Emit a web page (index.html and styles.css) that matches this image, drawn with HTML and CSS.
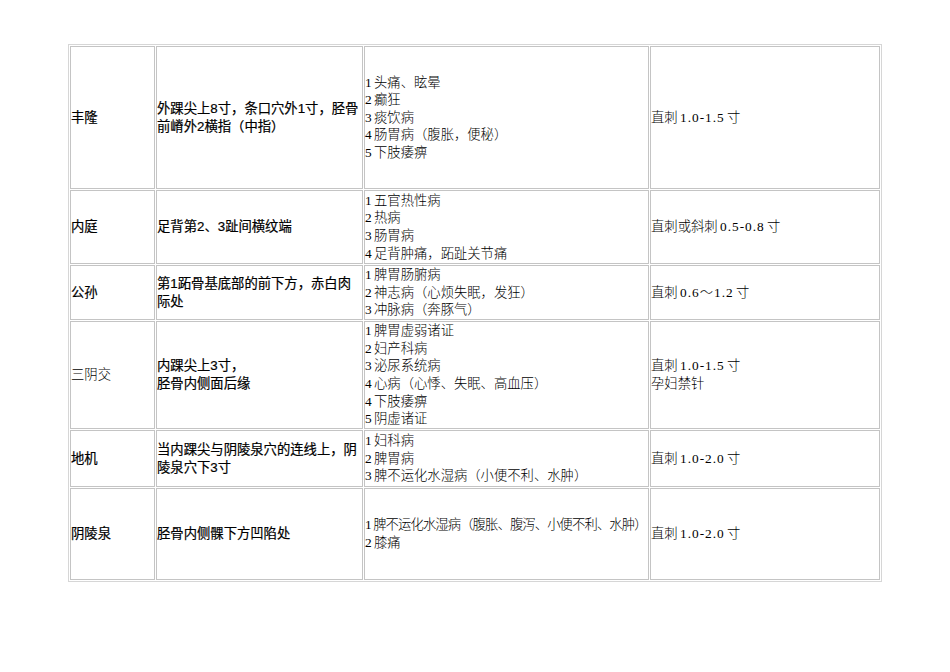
FILE: index.html
```html
<!DOCTYPE html>
<html lang="zh-CN">
<head>
<meta charset="utf-8">
<title>腧穴表</title>
<link rel="stylesheet" href="styles.css">
</head>
<body>
<div class="page">
<table class="acu">
  <tr class="r1">
    <td class="c1 hei">丰隆</td>
    <td class="c2 hei">外踝尖上8寸，条口穴外1寸，胫骨前嵴外2横指（中指）</td>
    <td class="c3 song">1 头痛、眩晕<br>2 癫狂<br>3 痰饮病<br>4 肠胃病（腹胀，便秘）<br>5 下肢痿痹</td>
    <td class="c4 song">直刺 <span class="num">1.0-1.5</span> 寸</td>
  </tr>
  <tr class="r2">
    <td class="c1 hei">内庭</td>
    <td class="c2 hei">足背第2、3趾间横纹端</td>
    <td class="c3 song">1 五官热性病<br>2 热病<br>3 肠胃病<br>4 足背肿痛，跖趾关节痛</td>
    <td class="c4 song">直刺或斜刺 <span class="num">0.5-0.8</span> 寸</td>
  </tr>
  <tr class="r3">
    <td class="c1 hei">公孙</td>
    <td class="c2 hei">第1跖骨基底部的前下方，赤白肉际处</td>
    <td class="c3 song">1 脾胃肠腑病<br>2 神志病（心烦失眠，发狂）<br>3 冲脉病（奔豚气）</td>
    <td class="c4 song">直刺 <span class="num">0.6～1.2</span> 寸</td>
  </tr>
  <tr class="r4">
    <td class="c1 song">三阴交</td>
    <td class="c2 hei">内踝尖上3寸，<br>胫骨内侧面后缘</td>
    <td class="c3 song">1 脾胃虚弱诸证<br>2 妇产科病<br>3 泌尿系统病<br>4 心病（心悸、失眠、高血压）<br>4 下肢痿痹<br>5 阴虚诸证</td>
    <td class="c4 song">直刺 <span class="num">1.0-1.5</span> 寸<br>孕妇禁针</td>
  </tr>
  <tr class="r5">
    <td class="c1 hei">地机</td>
    <td class="c2 hei">当内踝尖与阴陵泉穴的连线上，阴陵泉穴下3寸</td>
    <td class="c3 song">1 妇科病<br>2 脾胃病<br>3 脾不运化水湿病（小便不利、水肿）</td>
    <td class="c4 song">直刺 <span class="num">1.0-2.0</span> 寸</td>
  </tr>
  <tr class="r6">
    <td class="c1 hei">阴陵泉</td>
    <td class="c2 hei">胫骨内侧髁下方凹陷处</td>
    <td class="c3 song"><span class="tight">1 脾不运化水湿病（腹胀、腹泻、小便不利、水肿）</span><br>2 膝痛</td>
    <td class="c4 song">直刺 <span class="num">1.0-2.0</span> 寸</td>
  </tr>
</table>
</div>
</body>
</html>
```

FILE: styles.css
```css
html, body {
  margin: 0;
  padding: 0;
  background: #ffffff;
}

.page {
  padding: 44px 0 0 68px;
}

.acu {
  border-collapse: separate;
  border-spacing: 1px;
  border: 1px solid #d6d6d6;
  table-layout: fixed;
  width: 814px;
}

.acu td {
  border: 1px solid #c4c4c4;
  padding: 0;
  vertical-align: middle;
  text-align: left;
  font-size: 13.33px;
  color: #000;
}

.c1 { width: 83px; }
.c2 { width: 205px; }
.c3 { width: 283px; }
.c4 { width: 228px; }

.r1 { height: 143px; }
.r2 { height: 74px; }
.r3 { height: 55px; }
.r4 { height: 108px; }
.r5 { height: 57px; }
.r6 { height: 92px; }

.hei {
  font-family: "Liberation Sans", "Noto Sans CJK SC", sans-serif;
  font-weight: 400;
  line-height: 18px;
  -webkit-text-stroke: 0.2px #000;
}

.song {
  font-family: "Liberation Serif", "Noto Sans CJK SC", serif;
  font-weight: 300;
  line-height: 17.6px;
  color: #000;
  word-spacing: -1px;
}

.num {
  letter-spacing: 1px;
}

.tight {
  white-space: nowrap;
  letter-spacing: -0.9px;
  word-spacing: 0;
}
```
